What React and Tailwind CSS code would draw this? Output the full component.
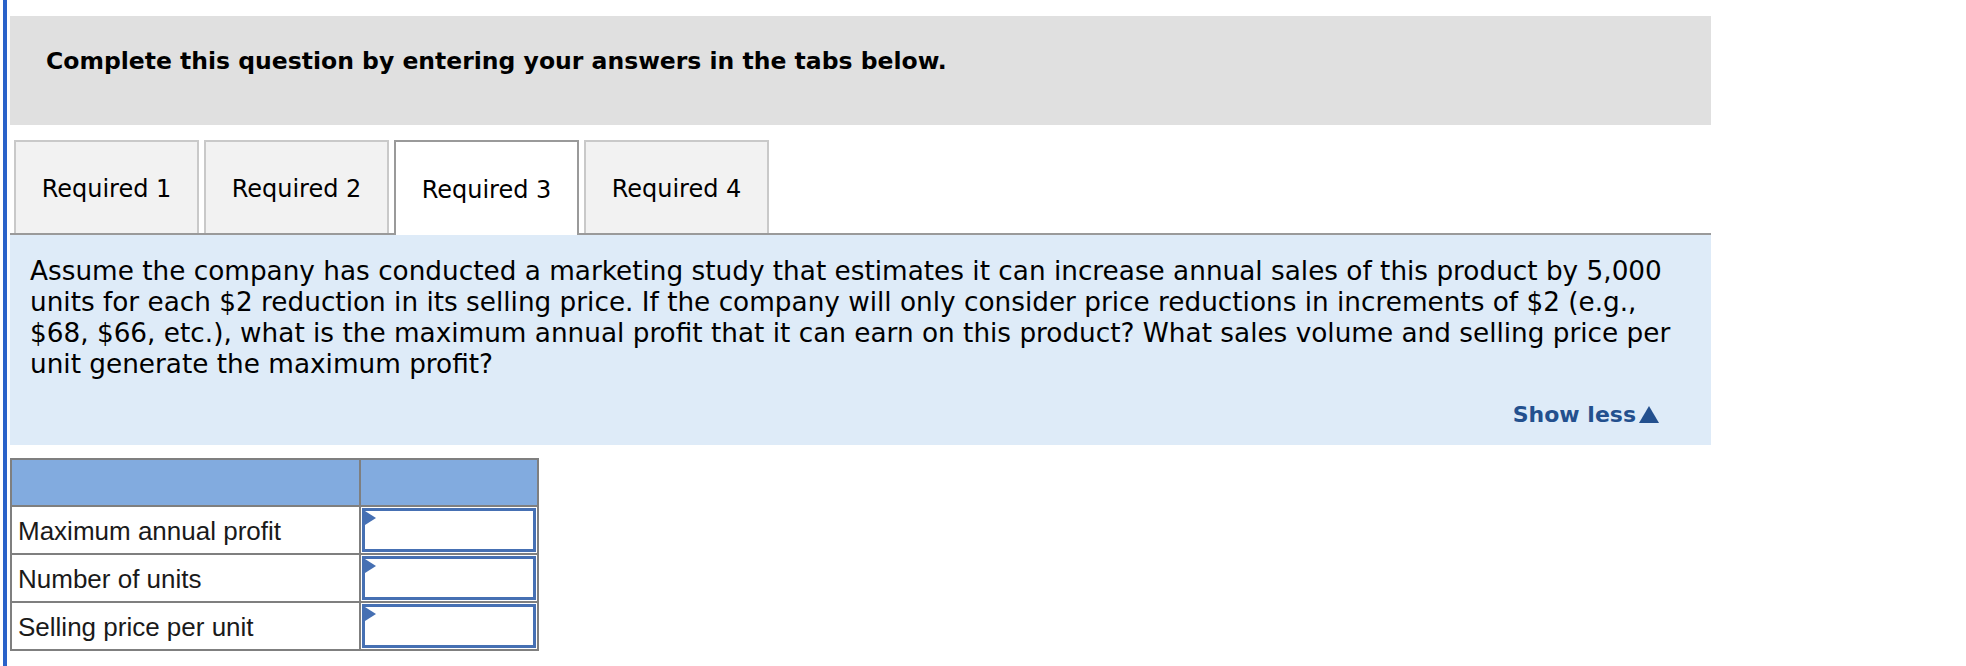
import React from "react";

const tabs = ["Required 1", "Required 2", "Required 3", "Required 4"];

const rows = ["Maximum annual profit", "Number of units", "Selling price per unit"];

export default function App() {
  const active = 2;

  return (
    <div className="min-h-[666px] w-[1966px] bg-white flex">
      {/* left blue rule */}
      <div className="ml-[3px] w-[4px] bg-[#2a62c9] shrink-0" />

      <div className="ml-[3px] w-[1701px] font-['DejaVu_Sans',sans-serif] text-black">
        {/* instruction bar */}
        <div className="mt-[16px] h-[109px] bg-[#e0e0e0] pl-[36px] pt-[31px]">
          <p className="text-[23.5px] font-bold leading-[28px]">
            Complete this question by entering your answers in the tabs below.
          </p>
        </div>

        {/* tabs */}
        <div className="mt-[15px] flex gap-[5px] pl-[4px] border-b-2 border-[#9a9a9a]">
          {tabs.map((t, i) => (
            <div
              key={t}
              className={
                i === active
                  ? "w-[185px] h-[95px] -mb-[2px] pt-[2px] bg-white border-2 border-b-0 border-[#9a9a9a] flex items-center justify-center text-[24px]"
                  : "w-[185px] h-[93px] pt-[2px] bg-[#f2f2f2] border-2 border-b-0 border-[#c9c9c9] flex items-center justify-center text-[24px]"
              }
            >
              {t}
            </div>
          ))}
        </div>

        {/* question panel */}
        <div className="h-[210px] bg-[#deebf8] pl-[20px] pr-[10px] pt-[21px] flex flex-col">
          <p className="text-[26.3px] leading-[31px] max-w-[1665px]">
            Assume the company has conducted a marketing study that estimates it can increase annual sales of this product by 5,000 units for each $2 reduction in its selling price. If the company will only consider price reductions in increments of $2 (e.g., $68, $66, etc.), what is the maximum annual profit that it can earn on this product? What sales volume and selling price per unit generate the maximum profit?
          </p>
          <div className="mt-auto mb-[14px] self-end pr-[42px] text-[22px] font-bold text-[#23508e] flex items-center gap-[3px]">
            <span>Show less</span>
            <span className="w-0 h-0 border-x-[10px] border-x-transparent border-b-[17px] border-b-[#23508e]" />
          </div>
        </div>

        {/* answer table */}
        <table className="mt-[13px] border-collapse border-2 border-[#7f7f7f] font-['Liberation_Sans',Arial,sans-serif] text-[26px] text-[#1a1a1a]">
          <thead>
            <tr className="h-[47px] bg-[#82abdf]">
              <th className="w-[349px] border-2 border-[#7f7f7f]" />
              <th className="w-[178px] border-2 border-[#7f7f7f]" />
            </tr>
          </thead>
          <tbody>
            {rows.map((r) => (
              <tr key={r} className="h-[48px]">
                <td className="border-2 border-[#7f7f7f] pl-[6px] pt-[2px] leading-none">{r}</td>
                <td className="border-2 border-[#7f7f7f] p-0 align-top">
                  <div className="relative m-px h-[44px] border-[3px] border-[#4670b3] bg-white">
                    <span className="absolute left-0 top-0 w-0 h-0 border-y-[7px] border-y-transparent border-l-[11px] border-l-[#4670b3]" />
                  </div>
                </td>
              </tr>
            ))}
          </tbody>
        </table>
      </div>
    </div>
  );
}
